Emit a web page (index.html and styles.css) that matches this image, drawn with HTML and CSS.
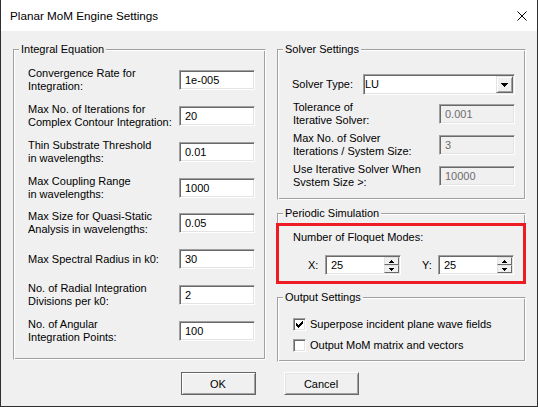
FILE: index.html
```html
<!DOCTYPE html>
<html>
<head>
<meta charset="utf-8">
<title>Planar MoM Engine Settings</title>
<link rel="stylesheet" href="styles.css">
</head>
<body>
<div class="window">
  <div class="titlebar">
    <span class="title">Planar MoM Engine Settings</span>
    <svg class="close" width="10" height="10" viewBox="0 0 10 10"><path d="M0.5 0.5L9.5 9.5M9.5 0.5L0.5 9.5" stroke="#000" stroke-width="1" fill="none"/></svg>
  </div>
  <div class="client">
    <div class="columns">
      <div class="group group-integral">
        <span class="legend">Integral Equation</span>
        <div class="row"><span class="lbl">Convergence Rate for<br>Integration:</span><input class="edit" type="text" value="1e-005"></div>
        <div class="row"><span class="lbl">Max No. of Iterations for<br>Complex Contour Integration:</span><input class="edit" type="text" value="20"></div>
        <div class="row"><span class="lbl">Thin Substrate Threshold<br>in wavelengths:</span><input class="edit" type="text" value="0.01"></div>
        <div class="row"><span class="lbl">Max Coupling Range<br>in wavelengths:</span><input class="edit" type="text" value="1000"></div>
        <div class="row"><span class="lbl">Max Size for Quasi-Static<br>Analysis in wavelengths:</span><input class="edit" type="text" value="0.05"></div>
        <div class="row"><span class="lbl">Max Spectral Radius in k0:</span><input class="edit" type="text" value="30"></div>
        <div class="row"><span class="lbl">No. of Radial Integration<br>Divisions per k0:</span><input class="edit" type="text" value="2"></div>
        <div class="row"><span class="lbl">No. of Angular<br>Integration Points:</span><input class="edit" type="text" value="100"></div>
      </div>
      <div class="right">
        <div class="group group-solver">
          <span class="legend">Solver Settings</span>
          <div class="combo-row">
            <span class="lbl lbl-solver">Solver Type:</span>
            <div class="combo">
              <span class="combo-text">LU</span>
              <span class="drop-btn"><svg width="7" height="4" viewBox="0 0 7 4" shape-rendering="crispEdges"><rect x="0" y="0" width="7" height="1" fill="#000"/><rect x="1" y="1" width="5" height="1" fill="#000"/><rect x="2" y="2" width="3" height="1" fill="#000"/><rect x="3" y="3" width="1" height="1" fill="#000"/></svg></span>
            </div>
          </div>
          <div class="solver-rows">
            <div class="srow"><span class="lbl">Tolerance of<br>Iterative Solver:</span><input class="edit disabled" type="text" value="0.001" disabled></div>
            <div class="srow"><span class="lbl">Max No. of Solver<br>Iterations / System Size:</span><input class="edit disabled" type="text" value="3" disabled></div>
            <div class="srow"><span class="lbl">Use Iterative Solver When<br>Svstem Size &gt;:</span><input class="edit disabled" type="text" value="10000" disabled></div>
          </div>
        </div>
        <div class="group group-periodic">
          <span class="legend">Periodic Simulation</span>
          <div class="lbl">Number of Floquet Modes:</div>
          <div class="xy-row">
            <span class="axis">X:</span>
            <div class="spin">
              <input class="spin-input" type="text" value="25">
              <div class="spin-btns">
                <span class="spin-btn"><svg width="5" height="3" viewBox="0 0 5 3" shape-rendering="crispEdges"><rect x="2" y="0" width="1" height="1"/><rect x="1" y="1" width="3" height="1"/><rect x="0" y="2" width="5" height="1"/></svg></span>
                <span class="spin-btn"><svg width="5" height="3" viewBox="0 0 5 3" shape-rendering="crispEdges"><rect x="0" y="0" width="5" height="1"/><rect x="1" y="1" width="3" height="1"/><rect x="2" y="2" width="1" height="1"/></svg></span>
              </div>
            </div>
            <span class="axis axis-y">Y:</span>
            <div class="spin">
              <input class="spin-input" type="text" value="25">
              <div class="spin-btns">
                <span class="spin-btn"><svg width="5" height="3" viewBox="0 0 5 3" shape-rendering="crispEdges"><rect x="2" y="0" width="1" height="1"/><rect x="1" y="1" width="3" height="1"/><rect x="0" y="2" width="5" height="1"/></svg></span>
                <span class="spin-btn"><svg width="5" height="3" viewBox="0 0 5 3" shape-rendering="crispEdges"><rect x="0" y="0" width="5" height="1"/><rect x="1" y="1" width="3" height="1"/><rect x="2" y="2" width="1" height="1"/></svg></span>
              </div>
            </div>
          </div>
        </div>
        <div class="group group-output">
          <span class="legend">Output Settings</span>
          <div class="check-row">
            <span class="checkbox"><svg width="7" height="7" viewBox="0 0 7 7" shape-rendering="crispEdges"><path d="M6 0h1v3h-1zM5 1h1v3h-1zM4 2h1v3h-1zM3 3h1v3h-1zM2 4h1v3h-1zM1 3h1v3h-1zM0 2h1v3h-1z" fill="#000"/></svg></span>
            <span class="check-lbl">Superpose incident plane wave fields</span>
          </div>
          <div class="check-row">
            <span class="checkbox"></span>
            <span class="check-lbl">Output MoM matrix and vectors</span>
          </div>
        </div>
      </div>
    </div>
    <div class="buttons">
      <button class="btn btn-default" type="button">OK</button>
      <button class="btn" type="button">Cancel</button>
    </div>
    <div class="highlight"></div>
  </div>
</div>
</body>
</html>
```
FILE: styles.css
```css
* { box-sizing: border-box; }
html, body { margin: 0; padding: 0; background: #fff; }
body {
  font-family: "Liberation Sans", Arial, sans-serif;
  font-size: 11px;
  color: #000;
}
.window {
  width: 538px;
  height: 407px;
  display: flex;
  flex-direction: column;
  border: 1px solid #2f2f2f;
  border-top: none;
}
.titlebar {
  height: 31px;
  flex: none;
  background: #fff;
  display: flex;
  align-items: center;
  padding: 0 10px 0 9px;
}
.title { font-size: 11.7px; line-height: 14px; padding-top: 1px; }
.close { margin-left: auto; display: block; }
.client {
  position: relative;
  flex: 1;
  background: #f0f0f0;
  padding: 18px 11px 0 12px;
}
.columns { display: flex; gap: 11px; align-items: flex-start; }
.right { display: flex; flex-direction: column; width: 249px; }
.group {
  position: relative;
  border: 1px solid;
  border-color: #a0a0a0 #fff #fff #a0a0a0;
  box-shadow: inset 1px 1px 0 #fff, inset -1px -1px 0 #a0a0a0;
}
.legend {
  position: absolute;
  top: -7px;
  left: 5px;
  padding: 0 2px;
  line-height: 13px;
  background: #f0f0f0;
  white-space: nowrap;
}
.lbl { line-height: 13px; white-space: nowrap; }

.group-integral {
  width: 253px;
  height: 311px;
  padding: 12.6px 10px 0 14px;
}
.row {
  height: 35.75px;
  display: flex;
  align-items: center;
  justify-content: space-between;
}
.edit {
  width: 76px;
  height: 20px;
  margin: 0;
  border: 1px solid;
  border-color: #a0a0a0 #fff #fff #a0a0a0;
  box-shadow: inset 1px 1px 0 #696969, inset -1px -1px 0 #e3e3e3;
  background: #fff;
  padding: 0 0 0 5px;
  font: inherit;
  color: #000;
  outline: none;
}
.edit.disabled { background: #f0f0f0; color: #6d6d6d; -webkit-text-fill-color: #6d6d6d; opacity: 1; }

.group-solver {
  height: 151px;
  padding: 24px 10px 0 15px;
}
.combo-row { display: flex; align-items: center; justify-content: space-between; height: 21px; }
.lbl-solver { margin-left: -1px; }
.combo {
  width: 152px;
  height: 21px;
  display: flex;
  align-items: stretch;
  border: 1px solid;
  border-color: #a0a0a0 #fff #fff #a0a0a0;
  box-shadow: inset 1px 1px 0 #696969, inset -1px -1px 0 #e3e3e3;
  background: #fff;
}
.combo-text { flex: 1; padding-left: 1px; line-height: 19px; }
.drop-btn {
  width: 17px;
  margin: 1px;
  display: flex;
  align-items: center;
  justify-content: center;
  background: #f0f0f0;
  border: 1px solid;
  border-color: #e3e3e3 #696969 #696969 #e3e3e3;
  box-shadow: inset 1px 1px 0 #fff, inset -1px -1px 0 #a0a0a0;
}
.drop-btn svg { display: block; }
.solver-rows { margin-top: 3.5px; }
.srow { height: 31px; display: flex; align-items: center; justify-content: space-between; }

.group-periodic {
  margin-top: 13px;
  height: 70px;
  padding: 16.5px 10px 0 15px;
}
.xy-row { display: flex; align-items: center; margin-top: 11.5px; padding-left: 15px; }
.axis { width: 17px; line-height: 13px; }
.axis-y { width: 16px; margin-left: 21px; }
.spin {
  width: 76px;
  height: 20px;
  display: flex;
  border: 1px solid;
  border-color: #a0a0a0 #fff #fff #a0a0a0;
  box-shadow: inset 1px 1px 0 #696969, inset -1px -1px 0 #e3e3e3;
  background: #fff;
}
.spin-input {
  flex: 1;
  min-width: 0;
  border: none;
  background: transparent;
  margin: 1px 0 1px 1px;
  padding: 0 0 0 4px;
  font: inherit;
  color: #000;
  outline: none;
}
.spin-btns { width: 16px; display: flex; flex-direction: column; padding: 1px 1px 1px 0; }
.spin-btn {
  flex: 1;
  display: flex;
  align-items: center;
  justify-content: center;
  background: #f0f0f0;
  border: 1px solid;
  border-color: #e3e3e3 #696969 #696969 #e3e3e3;
}
.spin-btn svg { display: block; fill: #000; }

.group-output {
  margin-top: 14px;
  height: 65px;
  padding: 15.5px 10px 0 15px;
}
.check-row { height: 21px; display: flex; align-items: center; }
.checkbox {
  width: 13px;
  height: 13px;
  flex: none;
  display: flex;
  align-items: center;
  justify-content: center;
  background: #fff;
  border: 1px solid;
  border-color: #a0a0a0 #fff #fff #a0a0a0;
  box-shadow: inset 1px 1px 0 #696969, inset -1px -1px 0 #e3e3e3;
}
.checkbox svg { display: block; }
.check-lbl { margin-left: 4px; line-height: 13px; white-space: nowrap; }

.buttons { display: flex; justify-content: center; gap: 28px; margin-top: 10px; }
.btn {
  width: 75px;
  height: 23px;
  margin: 0;
  padding: 0;
  font: inherit;
  color: #000;
  background: #f0f0f0;
  border: 1px solid;
  border-color: #fff #696969 #696969 #fff;
  box-shadow: inset 1px 1px 0 #e3e3e3, inset -1px -1px 0 #a0a0a0;
}
.btn-default {
  border-color: #646464;
  box-shadow: inset 1px 1px 0 #fff, inset -1px -1px 0 #a0a0a0;
}
.highlight {
  position: absolute;
  left: 275px;
  top: 192px;
  width: 250px;
  height: 61px;
  border: 3px solid #ed1c24;
  pointer-events: none;
}
```
